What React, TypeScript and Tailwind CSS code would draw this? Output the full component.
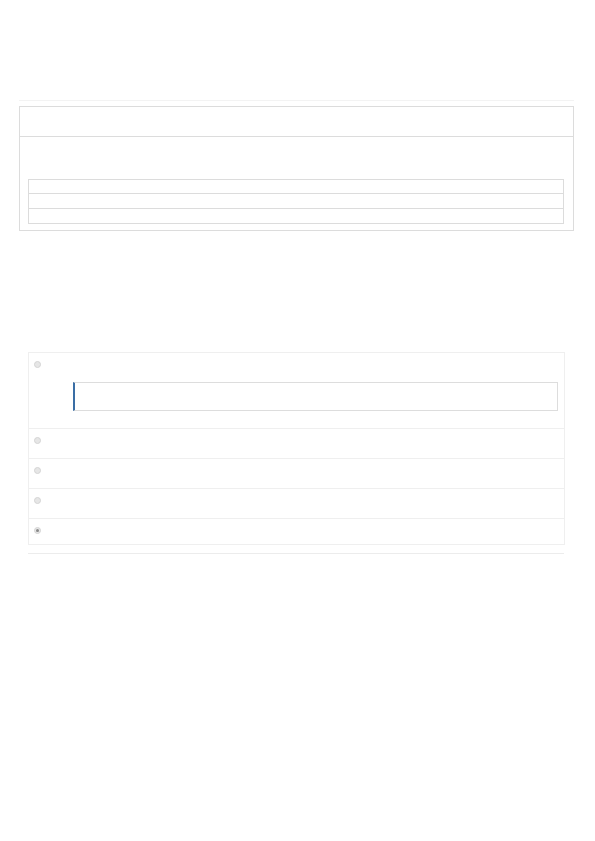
import React from "react";

function Radio({ checked }: { checked?: boolean }) {
  return (
    <div className="w-[7px] h-[7px] rounded-full border border-[#d4d4d4] bg-[#e6e6e6] flex items-center justify-center">
      {checked ? <div className="w-[3px] h-[3px] rounded-full bg-[#888]" /> : null}
    </div>
  );
}

export default function App() {
  return (
    <div className="w-[595px] h-[841px] bg-white font-['Liberation_Sans',sans-serif]">
      <div className="pt-[100px] pl-[19px] w-[574px]">
        <div className="h-[1px] bg-[#f3f3f3]" />
        <div className="mt-[5px] border border-[#dcdcdc]">
          <div className="h-[30px] border-b border-[#dcdcdc]" />
          <div className="pt-[42px] pl-[8px] pr-[9px] pb-[6px]">
            <div className="border border-[#dcdcdc]">
              <div className="h-[14px] border-b border-[#dcdcdc]" />
              <div className="h-[15px] border-b border-[#dcdcdc]" />
              <div className="h-[14px]" />
            </div>
          </div>
        </div>
      </div>

      <div className="mt-[121px] ml-[28px] w-[537px]">
        <div className="border border-[#efefef]">
          <div className="h-[76px] border-b border-[#efefef] pl-[5px] pt-[8px] flex flex-col">
            <Radio />
            <div className="mt-[14px] ml-[39px] mr-[6px] h-[29px] border border-[#dddddd] border-l-2 border-l-[#3a6ea5]" />
          </div>
          <div className="h-[30px] border-b border-[#efefef] pl-[5px] pt-[8px]">
            <Radio />
          </div>
          <div className="h-[30px] border-b border-[#efefef] pl-[5px] pt-[8px]">
            <Radio />
          </div>
          <div className="h-[30px] border-b border-[#efefef] pl-[5px] pt-[8px]">
            <Radio />
          </div>
          <div className="h-[25px] pl-[5px] pt-[8px]">
            <Radio checked />
          </div>
        </div>
        <div className="mt-[8px] h-[1px] bg-[#ececec] w-[536px]" />
      </div>
    </div>
  );
}
